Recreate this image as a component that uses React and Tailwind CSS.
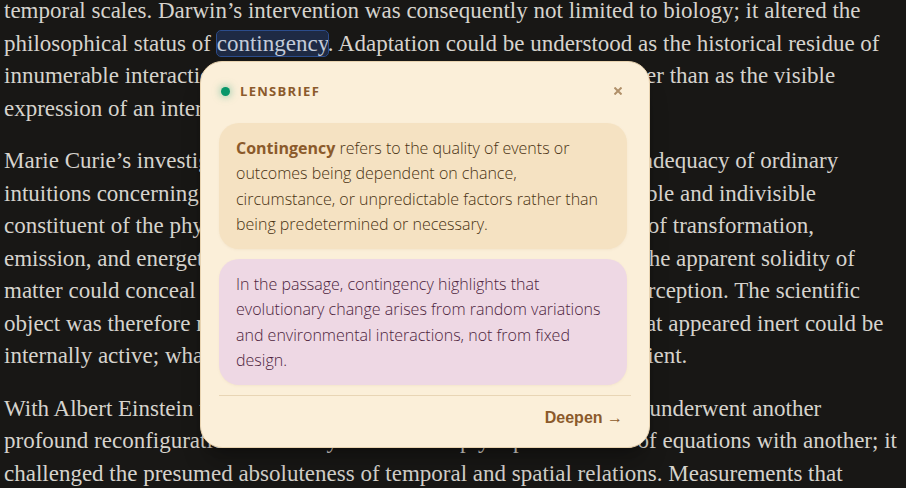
import React from 'react';

const darwin = [
  'innumerable interactions between organisms and natural settings, rather than as the visible',
  'expression of an internal and guiding purpose.',
];

const curie = [
  'Marie Curie’s investigations of radioactivity gradually exposed the inadequacy of ordinary',
  'intuitions concerning matter. The atom, long taken as the perfectly stable and indivisible',
  'constituent of the physical world, now became the primary living site of transformation,',
  'emission, and energetic release. Her patient work firmly showed that the apparent solidity of',
  'matter could conceal natural activity of a kind that lay well beyond perception. The scientific',
  'object was therefore not simply and immediately given to the eye: what appeared inert could be',
  'internally active; what seemed entirely permanent could soon be transient.',
];

const einstein = [
  'With Albert Einstein the underlying conceptual order of physics itself underwent another',
  'profound reconfiguration. Relativity does not simply replace one set of equations with another; it',
  'challenged the presumed absoluteness of temporal and spatial relations. Measurements that',
];

function Lines({ lines }) {
  return lines.map((line) => (
    <span key={line} className="block">{line}</span>
  ));
}

function Note({ className, children }) {
  return (
    <p className={`rounded-[20px] px-[17px] pt-[13px] pb-3 text-base leading-[1.58] font-light shadow-sm shadow-[#8b5a2b]/5 ${className}`}>
      {children}
    </p>
  );
}

function LensCard() {
  return (
    <section
      aria-label="LensBrief"
      className="absolute top-[61px] left-[200px] w-[450px] rounded-[22px] border border-[#e8d3b0] bg-[#fbefd9] px-[18px] py-[17px] font-['Open_Sans','Noto_Sans',sans-serif] shadow-xl shadow-black/20"
    >
      <header className="flex items-center justify-between pr-1">
        <div className="flex items-center gap-2.5 pl-0.5">
          <span className="size-[9px] rounded-full bg-[#079669] shadow-[0_0_8px_#07966999]" />
          <h2 className="text-[13px] leading-6 font-bold tracking-widest text-[#8b5a2b]">LENSBRIEF</h2>
        </div>
        <button type="button" aria-label="Close" className="flex size-[18px] items-center justify-center text-[#b0906a]">
          <svg viewBox="0 0 8 8" className="size-2" fill="none" stroke="currentColor" strokeWidth="2">
            <path d="M0.5 0.5l7 7M7.5 0.5l-7 7" />
          </svg>
        </button>
      </header>
      <div className="mt-5 flex flex-col gap-2.5 pr-1">
        <Note className="bg-[#f5e2c2] text-[#4a3313]">
          <strong className="font-bold text-[#8b5a2b]">Contingency</strong> refers to the quality of events or
          <br />outcomes being dependent on chance,
          <br />circumstance, or unpredictable factors rather than
          <br />being predetermined or necessary.
        </Note>
        <Note className="bg-[#eed8e4] text-[#4d1f3d]">
          In the passage, contingency highlights that
          <br />evolutionary change arises from random variations
          <br />and environmental interactions, not from fixed
          <br />design.
        </Note>
      </div>
      <footer className="mt-2.5 flex justify-end border-t border-[#e8d5b5] pt-2.5 pr-2">
        <button type="button" className="font-['Liberation_Sans',sans-serif] text-base leading-6 font-bold text-[#8b5a2b]">
          Deepen <span className="font-normal">→</span>
        </button>
      </footer>
    </section>
  );
}

export default function App() {
  return (
    <main className="relative h-screen overflow-hidden bg-[#181715]">
      <article className="-mt-[5px] flex flex-col gap-5 pl-1 font-['Liberation_Serif',serif] text-[23px] leading-[1.415] whitespace-nowrap text-[#d6d3cd]">
        <p>
          <span className="block">temporal scales. Darwin’s intervention was consequently not limited to biology; it altered the</span>
          <span className="block">
            philosophical status of{' '}
            <mark className="rounded-sm bg-[#1e2a44] text-[#c3cbd9] outline outline-[#2b4c8c]">contingency</mark>
            . Adaptation could be understood as the historical residue of
          </span>
          <Lines lines={darwin} />
        </p>
        <p><Lines lines={curie} /></p>
        <p><Lines lines={einstein} /></p>
      </article>
      <LensCard />
    </main>
  );
}
